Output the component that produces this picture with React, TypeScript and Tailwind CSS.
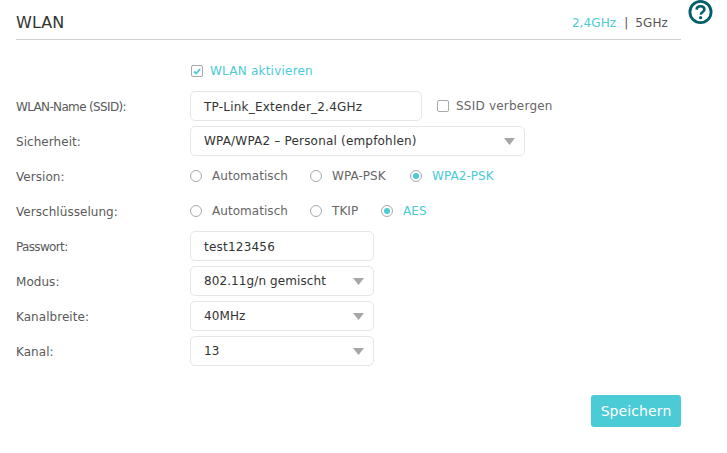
import React from "react";

function Caret() {
  return (
    <svg width="11" height="7" viewBox="0 0 11 7" className="shrink-0">
      <path d="M0 0H11L5.5 7Z" fill="#a6a6a6" />
    </svg>
  );
}

function Select({ value, width, wide }: { value: string; width: string; wide?: boolean }) {
  return (
    <div className={`flex h-[30px] items-center justify-between rounded-[5px] border border-[#e6e6e6] pl-[13px] pr-[9px] text-[#333333] ${width}`}>
      <span className={wide ? "tracking-[0.19px]" : "tracking-[0.1px]"}>{value}</span>
      <Caret />
    </div>
  );
}

function Input({ value, width }: { value: string; width: string }) {
  return (
    <div className={`flex h-[30px] items-center rounded-[5px] border border-[#e6e6e6] pl-[13px] pt-[1px] text-[#333333] ${width}`}>
      {value}
    </div>
  );
}

function Check({ checked }: { checked?: boolean }) {
  return (
    <span className="flex h-3 w-3 items-center justify-center rounded-[2px] border border-[#a7a9ac] bg-white">
      {checked && (
        <svg width="8" height="7" viewBox="0 0 8 7">
          <path d="M1 3.5L3.2 5.5L7 1.2" fill="none" stroke="#4acbd6" strokeWidth="1.8" />
        </svg>
      )}
    </span>
  );
}

function Radio({ label, checked, className }: { label: string; checked?: boolean; className: string }) {
  return (
    <div className={`flex items-center ${className}`}>
      <span className="flex h-3 w-3 shrink-0 items-center justify-center rounded-full border border-[#a7a9ac]">
        {checked && <span className="h-1.5 w-1.5 rounded-full bg-[#4acbd6]" />}
      </span>
      <span className={`ml-[10px] tracking-[0.05px] ${checked ? "text-[#4acbd6]" : "text-[#666666]"}`}>{label}</span>
    </div>
  );
}

function Row({ label, small, children }: { label?: string; small?: boolean; children: React.ReactNode }) {
  return (
    <div className="flex h-[30px] items-center">
      <div className={`w-[174px] shrink-0 pt-[2px] text-[#5a5a5a] ${small ? "text-[12px] tracking-[-0.65px]" : "tracking-[0.05px]"}`}>{label}</div>
      {children}
    </div>
  );
}

export default function App() {
  return (
    <div className="relative h-[453px] w-[727px] overflow-hidden bg-white px-[16px] font-['Tahoma','Verdana','DejaVu_Sans',sans-serif] text-[12px] tracking-[0.22px]">
      <button aria-label="Hilfe" className="absolute left-[688px] top-0">
        <svg width="25" height="25" viewBox="0 0 25 25">
          <circle cx="12.5" cy="12" r="10.6" fill="none" stroke="#005f6b" strokeWidth="2.8" />
          <path d="M8.6 9.6C8.7 7.4 10.3 6.3 12.5 6.3C14.8 6.3 16.4 7.6 16.4 9.5C16.4 12 13 12 12.7 14.7" fill="none" stroke="#005f6b" strokeWidth="2.6" />
          <circle cx="12.6" cy="17.7" r="1.6" fill="#005f6b" />
        </svg>
      </button>

      <header className="flex h-[40px] w-[665px] items-end justify-between border-b border-[#cfcfcf] pb-[7px]">
        <h1 className="relative top-[-1px] text-[16px] font-normal leading-none tracking-[0.1px] text-[#333333]">WLAN</h1>
        <div className="mr-[13px] flex items-center tracking-[0.1px] text-[#555555]">
          <span className="text-[#4acbd6]">2,4GHz</span>
          <span className="ml-[8px] mr-[7px] text-[#555555]">|</span>
          <span>5GHz</span>
        </div>
      </header>

      <div className="mt-[16px] flex flex-col gap-[5px]">
        <Row>
          <div className="flex items-center pl-[1px]">
            <Check checked />
            <span className="ml-[7px] text-[#4acbd6]">WLAN aktivieren</span>
          </div>
        </Row>
        <Row label="WLAN-Name (SSID):" small>
          <Input value="TP-Link_Extender_2.4GHz" width="w-[232px]" />
          <div className="ml-[15px] flex items-center">
            <Check />
            <span className="ml-[7px] text-[#666666]">SSID verbergen</span>
          </div>
        </Row>
        <Row label="Sicherheit:">
          <Select value="WPA/WPA2 – Personal (empfohlen)" width="w-[335px]" wide />
        </Row>
        <Row label="Version:">
          <Radio label="Automatisch" className="w-[120px]" />
          <Radio label="WPA-PSK" className="w-[100px]" />
          <Radio label="WPA2-PSK" checked className="w-[100px]" />
        </Row>
        <Row label="Verschlüsselung:">
          <Radio label="Automatisch" className="w-[120px]" />
          <Radio label="TKIP" className="w-[71px]" />
          <Radio label="AES" checked className="w-[60px]" />
        </Row>
        <Row label="Passwort:" small>
          <Input value="test123456" width="w-[184px]" />
        </Row>
        <Row label="Modus:">
          <Select value="802.11g/n gemischt" width="w-[184px]" />
        </Row>
        <Row label="Kanalbreite:">
          <Select value="40MHz" width="w-[184px]" />
        </Row>
        <Row label="Kanal:">
          <Select value="13" width="w-[184px]" />
        </Row>
      </div>

      <div className="mt-[29px] flex w-[665px] justify-end">
        <button className="h-[32px] w-[90px] rounded-[3px] bg-[#4acbd6] text-[14px] tracking-[0.1px] text-white">Speichern</button>
      </div>
    </div>
  );
}
